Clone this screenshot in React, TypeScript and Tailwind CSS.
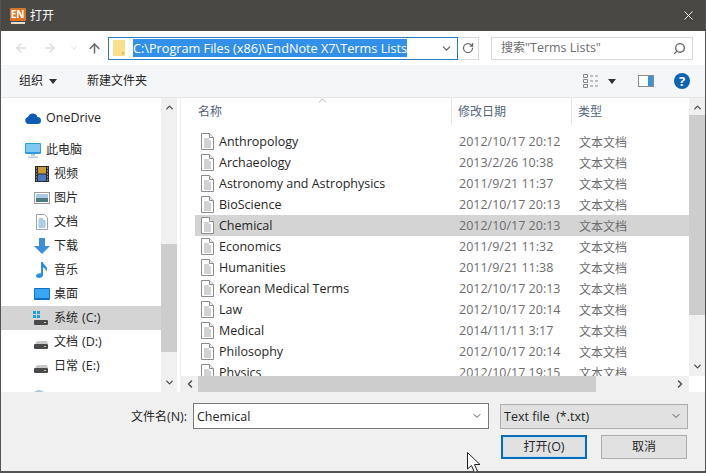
import { ChevronDown, ChevronLeft, ChevronRight, ChevronUp, ArrowLeft, ArrowRight, ArrowUp, RotateCw, Search, X } from "lucide-react";

const files = [
  ["Anthropology", "2012/10/17 20:12"],
  ["Archaeology", "2013/2/26 10:38"],
  ["Astronomy and Astrophysics", "2011/9/21 11:37"],
  ["BioScience", "2012/10/17 20:13"],
  ["Chemical", "2012/10/17 20:13"],
  ["Economics", "2011/9/21 11:32"],
  ["Humanities", "2011/9/21 11:38"],
  ["Korean Medical Terms", "2012/10/17 20:13"],
  ["Law", "2012/10/17 20:14"],
  ["Medical", "2014/11/11 3:17"],
  ["Philosophy", "2012/10/17 20:14"],
  ["Physics", "2012/10/17 19:15"],
];

function FileIcon() {
  return (
    <svg width="13" height="17" viewBox="0 0 13 17" className="shrink-0">
      <path d="M.5.5h8l4 4v12H.5z" fill="#fff" stroke="#8c8c8c" />
      <path d="M8.500.5v4h4" fill="#eee" stroke="#8c8c8c" />
      <path d="M3 6h5M3 8h7M3 10h7M3 12h7M3 14h7" stroke="#a5a5a5" />
    </svg>
  );
}

function DriveIcon({ win }: { win?: boolean }) {
  return (
    <svg width="16" height="16" viewBox="0 0 16 16" className="shrink-0">
      {win ? (
        <g fill="#1ba1e2">
          <rect x="0" y="1" width="3" height="3" />
          <rect x="4" y="1" width="3" height="3" />
          <rect x="0" y="5" width="3" height="3" />
          <rect x="4" y="5" width="3" height="3" />
        </g>
      ) : (
        <path d="M2 10l2-3h10l1 3z" fill="#c8c8c8" />
      )}
      <rect x="1" y="10" width="14" height="5" rx="1" fill="#4a4a4a" />
      <rect x="11" y="12" width="2" height="1" fill="#9be28a" />
    </svg>
  );
}

function NavIcon({ name }: { name: string }) {
  if (name === "video")
    return (
      <svg width="14" height="16" viewBox="0 0 14 16">
        <rect width="14" height="16" fill="#2b2b2b" />
        <rect x="3" y="1" width="8" height="6.500" fill="#c99a3a" />
        <rect x="3" y="8.500" width="8" height="6.500" fill="#4a78c0" />
        <path d="M1 2h1M1 5h1M1 8h1M1 11h1M1 14h1M12 2h1M12 5h1M12 8h1M12 11h1M12 14h1" stroke="#ddd" />
      </svg>
    );
  if (name === "image")
    return (
      <svg width="16" height="12" viewBox="0 0 16 12">
        <rect x=".5" y=".5" width="15" height="11" fill="#fff" stroke="#9a9a9a" />
        <rect x="2" y="2" width="12" height="4" fill="#a9c9e6" />
        <rect x="2" y="6" width="12" height="4" fill="#4f7a80" />
      </svg>
    );
  if (name === "doc")
    return (
      <svg width="12" height="16" viewBox="0 0 12 16">
        <path d="M.5.5h8l3 3v12H.5z" fill="#fff" stroke="#9aa5ad" />
        <path d="M3 5h4M2.500 7h7M2.500 9h7M2.500 11h7M2.500 13h7" stroke="#5b9bc9" />
      </svg>
    );
  if (name === "down")
    return (
      <svg width="16" height="16" viewBox="0 0 16 16">
        <path d="M5 0h6v8h5l-8 8-8-8h5z" fill="#3d8fdc" />
      </svg>
    );
  if (name === "music")
    return (
      <svg width="12" height="16" viewBox="0 0 12 16">
        <path d="M5 0h2c0 3 4 3.500 4 7 0 1-.5 2-1 2.500.2-2-1.500-3.500-3-4V13c0 2-2 3-4 3s-3-1-3-2c0-2 3-3 5-2.500z" fill="#2a8fe0" />
      </svg>
    );
  return (
    <svg width="16" height="12" viewBox="0 0 16 12">
      <rect width="16" height="12" rx="1" fill="#0f6fc6" />
      <rect x="1" y="1" width="14" height="9" fill="#3aa5f2" />
    </svg>
  );
}

const places = [
  { label: "视频", icon: "video" },
  { label: "图片", icon: "image" },
  { label: "文档", icon: "doc" },
  { label: "下载", icon: "down" },
  { label: "音乐", icon: "music" },
  { label: "桌面", icon: "desktop" },
];

const drives = [
  { label: "系统", letter: "(C:)", win: true, active: true },
  { label: "文档", letter: "(D:)" },
  { label: "日常", letter: "(E:)" },
];

export default function App() {
  return (
    <div
      className="w-[706px] h-[473px] overflow-hidden bg-[#f0f0f0] text-[12.5px] text-[#262626] border border-t-0 border-[#55534f] flex flex-col relative"
      style={{ fontFamily: '"Open Sans", "Noto Sans CJK SC", sans-serif' }}
    >
      {/* title bar */}
      <div className="h-[31px] shrink-0 bg-[#4a4845] -mx-px flex items-center pl-[9px] pr-[10px] text-white">
        <div className="w-[17px] shrink-0 flex flex-col items-center">
          <div className="w-[16px] h-[13px] rounded-[1px] bg-[#d9742a] text-[10px] font-bold leading-[13px] text-center text-white">EN</div>
          <div className="w-[14px] h-[2px] mt-[1px] bg-[#e9dccd]" />
        </div>
        <span className="ml-[4px] text-[12px]">打开</span>
        <X size={15} strokeWidth={1.5} className="ml-auto" />
      </div>

      {/* address row */}
      <div className="h-[34px] shrink-0 bg-white flex items-center pl-[13px] pr-[12px]">
        <ArrowLeft size={14} strokeWidth={2.5} className="text-[#dcdcdc]" />
        <ArrowRight size={14} strokeWidth={2.5} className="text-[#dcdcdc] ml-[15px]" />
        <ChevronDown size={10} strokeWidth={2} className="text-[#dcdcdc] ml-[12px]" />
        <ArrowUp size={15} strokeWidth={2.5} className="text-[#6e6e6e] ml-[8px]" />
        <div className="ml-[6px] w-[350px] h-[23px] border border-[#2b7fc0] flex items-center pl-[4px] pr-[4px]">
          <svg width="13" height="16" viewBox="0 0 13 16" className="shrink-0">
            <path d="M0 0h12v16H0z" fill="#fbe08c" />
            <path d="M9 16v-4h3z" fill="#e3bb55" />
          </svg>
          <span className="ml-[7px] bg-[#3390ea] text-white text-[12.7px] leading-[18px] whitespace-nowrap">C:\Program Files (x86)\EndNote X7\Terms Lists</span>
          <ChevronDown size={13} className="ml-auto text-[#555]" />
        </div>
        <div className="w-[21px] h-[23px] border border-l-0 border-[#d9d9d9] flex items-center justify-center">
          <RotateCw size={12} strokeWidth={2.5} className="text-[#666]" />
        </div>
        <div className="ml-[12px] w-[202px] h-[23px] border border-[#d9d9d9] flex items-center pl-[9px] pr-[6px] text-[#6d6d6d] whitespace-nowrap">
          <span className="text-[12px]">搜索</span>"Terms Lists"
          <Search size={13} strokeWidth={2.5} className="ml-auto text-[#666] -scale-x-100" />
        </div>
      </div>

      {/* command bar */}
      <div className="h-[33px] shrink-0 bg-[#f5f6f7] border-b border-[#e5e5e5] flex items-center pl-[18px] pr-[15px] text-[12px]">
        <span>组织</span>
        <span className="ml-[6px] border-x-[4px] border-x-transparent border-t-[5px] border-t-[#333]" />
        <span className="ml-[30px]">新建文件夹</span>
        <svg width="17" height="14" viewBox="0 0 17 14" className="ml-auto">
          <path d="M.5.500h4v3h-4zM.5 5.500h4v3h-4zM.5 10.500h4v3h-4z" fill="none" stroke="#888" />
          <path d="M7 2h3M12 2h3M7 7h3M12 7h3M7 12h3M12 12h3" stroke="#888" />
        </svg>
        <span className="ml-[8px] border-x-[4px] border-x-transparent border-t-[5px] border-t-[#333]" />
        <svg width="16" height="12" viewBox="0 0 16 12" className="ml-[22px]">
          <rect x=".5" y=".5" width="15" height="11" fill="#fff" stroke="#8a8a8a" />
          <rect x="10" y="1" width="5" height="10" fill="#3a93d8" />
        </svg>
        <div className="ml-[20px] w-[16px] h-[16px] rounded-full bg-[#0a63b5] text-white text-[13px] font-bold leading-[16px] text-center">?</div>
      </div>

      {/* main area */}
      <div className="h-[294px] shrink-0 bg-white flex">
        {/* sidebar */}
        <div className="w-[160px] shrink-0 overflow-hidden pt-[8px]">
          <div className="h-[24px] flex items-center pl-[24px] gap-[5px]">
            <svg width="16" height="11" viewBox="0 0 16 11">
              <path d="M3.500 11a3.500 3.500 0 0 1-.5-6.900A5 5 0 0 1 12.500 4 3.500 3.500 0 0 1 12.500 11z" fill="#0f5cb8" />
            </svg>
            <span>OneDrive</span>
          </div>
          <div className="h-[24px] mt-[8px] flex items-center pl-[24px] gap-[5px] text-[12px]">
            <svg width="16" height="15" viewBox="0 0 16 15">
              <rect width="16" height="11" rx="1" fill="#2f9be0" />
              <rect x="1" y="1" width="14" height="8" fill="#7fc8f2" />
              <path d="M6 11h4v2H6zM3 13.500h10V15H3z" fill="#b9cbd6" />
            </svg>
            <span>此电脑</span>
          </div>
          {places.map((p) => (
            <div key={p.label} className="h-[24px] flex items-center pl-[32px] text-[12px]">
              <span className="w-[17px] flex justify-center shrink-0">
                <NavIcon name={p.icon} />
              </span>
              <span className="ml-[4px]">{p.label}</span>
            </div>
          ))}
          {drives.map((d) => (
            <div key={d.label} className={`h-[24px] flex items-center pl-[32px] ${d.active ? "bg-[#d4d4d4]" : ""}`}>
              <DriveIcon win={d.win} />
              <span className="ml-[5px] text-[12px]">{d.label}</span>
              <span className="ml-[4px]">{d.letter}</span>
            </div>
          ))}
          <div className="h-[24px] flex pl-[31px] pt-[12px]">
            <span className="w-[14px] h-[14px] rounded-full bg-[#a9c9dd]" />
          </div>
        </div>

        {/* sidebar scrollbar */}
        <div className="w-[16px] shrink-0 bg-[#f0f0f0] flex flex-col items-center justify-between py-[4px] relative">
          <ChevronUp size={11} strokeWidth={3} className="text-[#505050]" />
          <div className="absolute left-0 top-[146px] w-full h-[108px] bg-[#cdcdcd]" />
          <ChevronDown size={11} strokeWidth={3} className="text-[#505050]" />
        </div>

        {/* file list */}
        <div className="flex-1 min-w-0 ml-[3px] border-l border-[#f0f0f0] flex flex-col">
          <div className="flex-1 min-h-0 flex">
            <div className="flex-1 min-w-0 overflow-hidden pl-[14px]">
              <div className="h-[27px] flex text-[#55657a] text-[12px] relative">
                <div className="w-[257px] pl-[3px] pt-[5px] border-r border-[#e5e5e5]">名称</div>
                <div className="w-[120px] pl-[6px] pt-[5px] border-r border-[#e5e5e5]">修改日期</div>
                <div className="pl-[6px] pt-[5px]">类型</div>
                <ChevronUp size={13} strokeWidth={1} className="absolute left-[121px] -top-[4px] text-[#777]" />
              </div>
              <div className="mt-[6px]">
                {files.map(([name, date]) => (
                  <div key={name} className={`h-[21px] flex items-center ${name === "Chemical" ? "bg-[#d4d4d4]" : ""}`}>
                    <span className="w-[24px] flex justify-center shrink-0 pl-[1px]">
                      <FileIcon />
                    </span>
                    <span className="w-[240px] pt-[2px] whitespace-nowrap">{name}</span>
                    <span className="w-[120px] pt-[2px] text-[#6d6d6d] whitespace-nowrap">{date}</span>
                    <span className="pt-[2px] text-[#6d6d6d] text-[12px]">文本文档</span>
                  </div>
                ))}
              </div>
            </div>
            <div className="w-[16px] shrink-0 bg-[#f0f0f0] flex flex-col items-center justify-between py-[4px] relative">
              <ChevronUp size={11} strokeWidth={3} className="text-[#505050]" />
              <div className="absolute left-0 top-[17px] w-full h-[200px] bg-[#cdcdcd]" />
              <ChevronDown size={11} strokeWidth={3} className="text-[#505050]" />
            </div>
          </div>
          <div className="h-[16px] shrink-0 flex">
            <div className="flex-1 bg-[#f0f0f0] flex items-center justify-between px-[3px] relative">
              <ChevronLeft size={12} strokeWidth={3} className="text-[#505050]" />
              <div className="absolute left-[17px] top-0 h-full w-[398px] bg-[#cdcdcd]" />
              <ChevronRight size={12} strokeWidth={3} className="text-[#505050]" />
            </div>
            <div className="w-[16px] bg-white" />
          </div>
        </div>
      </div>

      {/* bottom */}
      <div className="flex-1 pt-[11px] pl-[130px] pr-[17px] relative">
        <div className="flex items-center">
          <span className="w-[62px] whitespace-nowrap pt-[2px]"><span className="text-[12px]">文件名</span>(N):</span>
          <div className="w-[296px] h-[26px] bg-white border border-[#7a7a7a] flex items-center pl-[3px] pr-[5px]">
            <span className="pt-[2px]">Chemical</span>
            <ChevronDown size={12} className="ml-auto text-[#555]" />
          </div>
          <div className="ml-[11px] w-[188px] h-[25px] bg-[#e1e1e1] border border-[#adadad] flex items-center pl-[3px] pr-[5px] shrink-0">
            <span className="pt-[2px]">Text file&nbsp;&nbsp;(*.txt)</span>
            <ChevronDown size={12} className="ml-auto text-[#555]" />
          </div>
        </div>
        <div className="flex justify-end gap-[14px] mt-[6px] mr-[1px]">
          <button className="w-[86px] h-[24px] bg-[#e1e1e1] border-2 border-[#0f6cb0] shadow-[inset_0_0_0_1px_#bfe3f8]"><span className="text-[12px]">打开</span>(O)</button>
          <button className="w-[86px] h-[24px] bg-[#e1e1e1] border border-[#adadad] text-[12px]">取消</button>
        </div>
        <svg width="17" height="22" viewBox="0 0 17 22" className="absolute left-[466px] top-[60px]">
          <path d="M.5.500V17l4-3.500 3 7 3-1.300-3-6.700H13z" fill="#fff" stroke="#222" />
        </svg>
      </div>
      <div className="h-px shrink-0 bg-[#55534f]" />
    </div>
  );
}
